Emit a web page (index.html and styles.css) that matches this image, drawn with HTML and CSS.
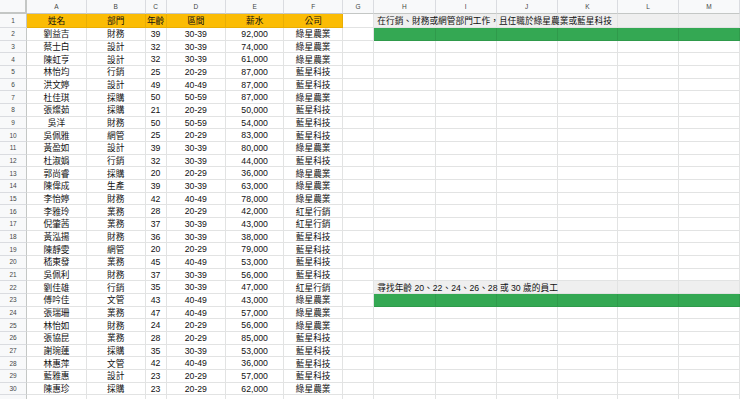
FILE: index.html
```html
<!DOCTYPE html>
<html lang="zh-Hant">
<head>
<meta charset="utf-8">
<title>Sheet</title>
<link rel="stylesheet" href="styles.css">
</head>
<body>
<div class="sheet">
<div class="corner"></div><div class="ch">A</div><div class="ch">B</div><div class="ch">C</div><div class="ch">D</div><div class="ch">E</div><div class="ch">F</div><div class="ch">G</div><div class="ch">H</div><div class="ch">I</div><div class="ch">J</div><div class="ch">K</div><div class="ch">L</div><div class="ch">M</div>

<div class="rh">1</div><div class="c hd">姓名</div><div class="c hd">部門</div><div class="c hd">年齡</div><div class="c hd">區間</div><div class="c hd">薪水</div><div class="c hd">公司</div><div class="c"></div><div class="c note">在行銷、財務或網管部門工作，且任職於綠星農業或藍星科技</div><div class="c gray"></div><div class="c gray"></div><div class="c gray"></div><div class="c gray"></div><div class="c gray"></div>

<div class="rh">2</div><div class="c">劉益吉</div><div class="c">財務</div><div class="c">39</div><div class="c">30-39</div><div class="c">92,000</div><div class="c">綠星農業</div><div class="c"></div><div class="c green"></div><div class="c green"></div><div class="c green"></div><div class="c green"></div><div class="c green"></div><div class="c green"></div>
<div class="rh">3</div><div class="c">蔡士白</div><div class="c">設計</div><div class="c">32</div><div class="c">30-39</div><div class="c">74,000</div><div class="c">綠星農業</div><div class="c"></div><div class="c"></div><div class="c"></div><div class="c"></div><div class="c"></div><div class="c"></div><div class="c"></div>
<div class="rh">4</div><div class="c">陳虹亨</div><div class="c">設計</div><div class="c">32</div><div class="c">30-39</div><div class="c">61,000</div><div class="c">綠星農業</div><div class="c"></div><div class="c"></div><div class="c"></div><div class="c"></div><div class="c"></div><div class="c"></div><div class="c"></div>
<div class="rh">5</div><div class="c">林怡均</div><div class="c">行銷</div><div class="c">25</div><div class="c">20-29</div><div class="c">87,000</div><div class="c">藍星科技</div><div class="c"></div><div class="c"></div><div class="c"></div><div class="c"></div><div class="c"></div><div class="c"></div><div class="c"></div>
<div class="rh">6</div><div class="c">洪文婷</div><div class="c">設計</div><div class="c">49</div><div class="c">40-49</div><div class="c">87,000</div><div class="c">藍星科技</div><div class="c"></div><div class="c"></div><div class="c"></div><div class="c"></div><div class="c"></div><div class="c"></div><div class="c"></div>
<div class="rh">7</div><div class="c">杜佳琪</div><div class="c">採購</div><div class="c">50</div><div class="c">50-59</div><div class="c">87,000</div><div class="c">綠星農業</div><div class="c"></div><div class="c"></div><div class="c"></div><div class="c"></div><div class="c"></div><div class="c"></div><div class="c"></div>
<div class="rh">8</div><div class="c">張燦茹</div><div class="c">採購</div><div class="c">21</div><div class="c">20-29</div><div class="c">50,000</div><div class="c">藍星科技</div><div class="c"></div><div class="c"></div><div class="c"></div><div class="c"></div><div class="c"></div><div class="c"></div><div class="c"></div>
<div class="rh">9</div><div class="c">吳洋</div><div class="c">財務</div><div class="c">50</div><div class="c">50-59</div><div class="c">54,000</div><div class="c">藍星科技</div><div class="c"></div><div class="c"></div><div class="c"></div><div class="c"></div><div class="c"></div><div class="c"></div><div class="c"></div>
<div class="rh">10</div><div class="c">吳佩雅</div><div class="c">網管</div><div class="c">25</div><div class="c">20-29</div><div class="c">83,000</div><div class="c">藍星科技</div><div class="c"></div><div class="c"></div><div class="c"></div><div class="c"></div><div class="c"></div><div class="c"></div><div class="c"></div>
<div class="rh">11</div><div class="c">黃盈如</div><div class="c">設計</div><div class="c">39</div><div class="c">30-39</div><div class="c">80,000</div><div class="c">綠星農業</div><div class="c"></div><div class="c"></div><div class="c"></div><div class="c"></div><div class="c"></div><div class="c"></div><div class="c"></div>
<div class="rh">12</div><div class="c">杜淑娟</div><div class="c">行銷</div><div class="c">32</div><div class="c">30-39</div><div class="c">44,000</div><div class="c">藍星科技</div><div class="c"></div><div class="c"></div><div class="c"></div><div class="c"></div><div class="c"></div><div class="c"></div><div class="c"></div>
<div class="rh">13</div><div class="c">郭尚睿</div><div class="c">採購</div><div class="c">20</div><div class="c">20-29</div><div class="c">36,000</div><div class="c">綠星農業</div><div class="c"></div><div class="c"></div><div class="c"></div><div class="c"></div><div class="c"></div><div class="c"></div><div class="c"></div>
<div class="rh">14</div><div class="c">陳偉成</div><div class="c">生產</div><div class="c">39</div><div class="c">30-39</div><div class="c">63,000</div><div class="c">綠星農業</div><div class="c"></div><div class="c"></div><div class="c"></div><div class="c"></div><div class="c"></div><div class="c"></div><div class="c"></div>
<div class="rh">15</div><div class="c">李怡婷</div><div class="c">財務</div><div class="c">42</div><div class="c">40-49</div><div class="c">78,000</div><div class="c">綠星農業</div><div class="c"></div><div class="c"></div><div class="c"></div><div class="c"></div><div class="c"></div><div class="c"></div><div class="c"></div>
<div class="rh">16</div><div class="c">李雅玲</div><div class="c">業務</div><div class="c">28</div><div class="c">20-29</div><div class="c">42,000</div><div class="c">紅星行銷</div><div class="c"></div><div class="c"></div><div class="c"></div><div class="c"></div><div class="c"></div><div class="c"></div><div class="c"></div>
<div class="rh">17</div><div class="c">倪肇茜</div><div class="c">業務</div><div class="c">37</div><div class="c">30-39</div><div class="c">43,000</div><div class="c">紅星行銷</div><div class="c"></div><div class="c"></div><div class="c"></div><div class="c"></div><div class="c"></div><div class="c"></div><div class="c"></div>
<div class="rh">18</div><div class="c">黃泓揚</div><div class="c">財務</div><div class="c">36</div><div class="c">30-39</div><div class="c">38,000</div><div class="c">藍星科技</div><div class="c"></div><div class="c"></div><div class="c"></div><div class="c"></div><div class="c"></div><div class="c"></div><div class="c"></div>
<div class="rh">19</div><div class="c">陳靜雯</div><div class="c">網管</div><div class="c">20</div><div class="c">20-29</div><div class="c">79,000</div><div class="c">藍星科技</div><div class="c"></div><div class="c"></div><div class="c"></div><div class="c"></div><div class="c"></div><div class="c"></div><div class="c"></div>
<div class="rh">20</div><div class="c">嵇東發</div><div class="c">業務</div><div class="c">45</div><div class="c">40-49</div><div class="c">53,000</div><div class="c">藍星科技</div><div class="c"></div><div class="c"></div><div class="c"></div><div class="c"></div><div class="c"></div><div class="c"></div><div class="c"></div>
<div class="rh">21</div><div class="c">吳佩利</div><div class="c">財務</div><div class="c">37</div><div class="c">30-39</div><div class="c">56,000</div><div class="c">藍星科技</div><div class="c"></div><div class="c"></div><div class="c"></div><div class="c"></div><div class="c"></div><div class="c"></div><div class="c"></div>
<div class="rh">22</div><div class="c">劉佳雄</div><div class="c">行銷</div><div class="c">35</div><div class="c">30-39</div><div class="c">47,000</div><div class="c">紅星行銷</div><div class="c"></div><div class="c note">尋找年齡 20、22、24、26、28 或 30 歲的員工</div><div class="c gray"></div><div class="c gray"></div><div class="c gray"></div><div class="c gray"></div><div class="c gray"></div>
<div class="rh">23</div><div class="c">傅吟佳</div><div class="c">文管</div><div class="c">43</div><div class="c">40-49</div><div class="c">43,000</div><div class="c">綠星農業</div><div class="c"></div><div class="c green"></div><div class="c green"></div><div class="c green"></div><div class="c green"></div><div class="c green"></div><div class="c green"></div>
<div class="rh">24</div><div class="c">張瑞珊</div><div class="c">業務</div><div class="c">47</div><div class="c">40-49</div><div class="c">57,000</div><div class="c">綠星農業</div><div class="c"></div><div class="c"></div><div class="c"></div><div class="c"></div><div class="c"></div><div class="c"></div><div class="c"></div>
<div class="rh">25</div><div class="c">林怡如</div><div class="c">財務</div><div class="c">24</div><div class="c">20-29</div><div class="c">56,000</div><div class="c">綠星農業</div><div class="c"></div><div class="c"></div><div class="c"></div><div class="c"></div><div class="c"></div><div class="c"></div><div class="c"></div>
<div class="rh">26</div><div class="c">張協昆</div><div class="c">業務</div><div class="c">28</div><div class="c">20-29</div><div class="c">85,000</div><div class="c">藍星科技</div><div class="c"></div><div class="c"></div><div class="c"></div><div class="c"></div><div class="c"></div><div class="c"></div><div class="c"></div>
<div class="rh">27</div><div class="c">謝琬蓮</div><div class="c">採購</div><div class="c">35</div><div class="c">30-39</div><div class="c">53,000</div><div class="c">藍星科技</div><div class="c"></div><div class="c"></div><div class="c"></div><div class="c"></div><div class="c"></div><div class="c"></div><div class="c"></div>
<div class="rh">28</div><div class="c">林惠萍</div><div class="c">文管</div><div class="c">42</div><div class="c">40-49</div><div class="c">36,000</div><div class="c">藍星科技</div><div class="c"></div><div class="c"></div><div class="c"></div><div class="c"></div><div class="c"></div><div class="c"></div><div class="c"></div>
<div class="rh">29</div><div class="c">藍雅惠</div><div class="c">設計</div><div class="c">23</div><div class="c">20-29</div><div class="c">57,000</div><div class="c">藍星科技</div><div class="c"></div><div class="c"></div><div class="c"></div><div class="c"></div><div class="c"></div><div class="c"></div><div class="c"></div>
<div class="rh">30</div><div class="c">陳惠珍</div><div class="c">採購</div><div class="c">23</div><div class="c">20-29</div><div class="c">62,000</div><div class="c">綠星農業</div><div class="c"></div><div class="c"></div><div class="c"></div><div class="c"></div><div class="c"></div><div class="c"></div><div class="c"></div>
<div class="rh"></div><div class="c"></div><div class="c"></div><div class="c"></div><div class="c"></div><div class="c"></div><div class="c"></div><div class="c"></div><div class="c"></div><div class="c"></div><div class="c"></div><div class="c"></div><div class="c"></div><div class="c"></div>
</div>
</body>
</html>
```
FILE: styles.css
```css
html, body {
  margin: 0;
  padding: 0;
  background: #ffffff;
  overflow: hidden;
}

.sheet {
  display: grid;
  grid-template-columns: 27px 60px 58.5px 21.2px 59.3px 58.3px 58.7px 31.3px 61.4px 61px 61px 60.6px 60.7px 61px;
  grid-template-rows: 14px 14px repeat(30, 12.68px);
  width: 740px;
  font-family: "Liberation Sans", Arial, "Noto Sans CJK TC", sans-serif;
  color: #111111;
}

.corner {
  background: #f8f9fa;
  border-right: 2px solid #c4c7c5;
  border-bottom: 2px solid #c4c7c5;
  box-sizing: border-box;
}

.ch {
  background: #f8f9fa;
  border-right: 1px solid #dadce0;
  border-bottom: 1px solid #c4c7c5;
  box-sizing: border-box;
  display: flex;
  align-items: center;
  justify-content: center;
  font-size: 6.5px;
  color: #444746;
}

.rh {
  background: #f8f9fa;
  border-right: 1px solid #c4c7c5;
  border-bottom: 1px solid #dadce0;
  box-sizing: border-box;
  display: flex;
  align-items: center;
  justify-content: center;
  font-size: 6.5px;
  color: #444746;
}

.c {
  border-right: 1px solid #e2e3e3;
  border-bottom: 1px solid #e2e3e3;
  box-sizing: border-box;
  display: flex;
  align-items: center;
  justify-content: center;
  font-size: 8.7px;
  white-space: nowrap;
  min-width: 0;
}

.hd {
  background: #fbbc04;
  border-right-color: #e9ae04;
  border-bottom-color: #e9ae04;
}

.note {
  background: #efefef;
  justify-content: flex-start;
  padding-left: 3px;
  overflow: visible;
  z-index: 1;
}

.gray {
  background: #efefef;
}

.green {
  background: #34a853;
  border-right-color: #2f9a4b;
  border-bottom-color: #2f9a4b;
}
```
